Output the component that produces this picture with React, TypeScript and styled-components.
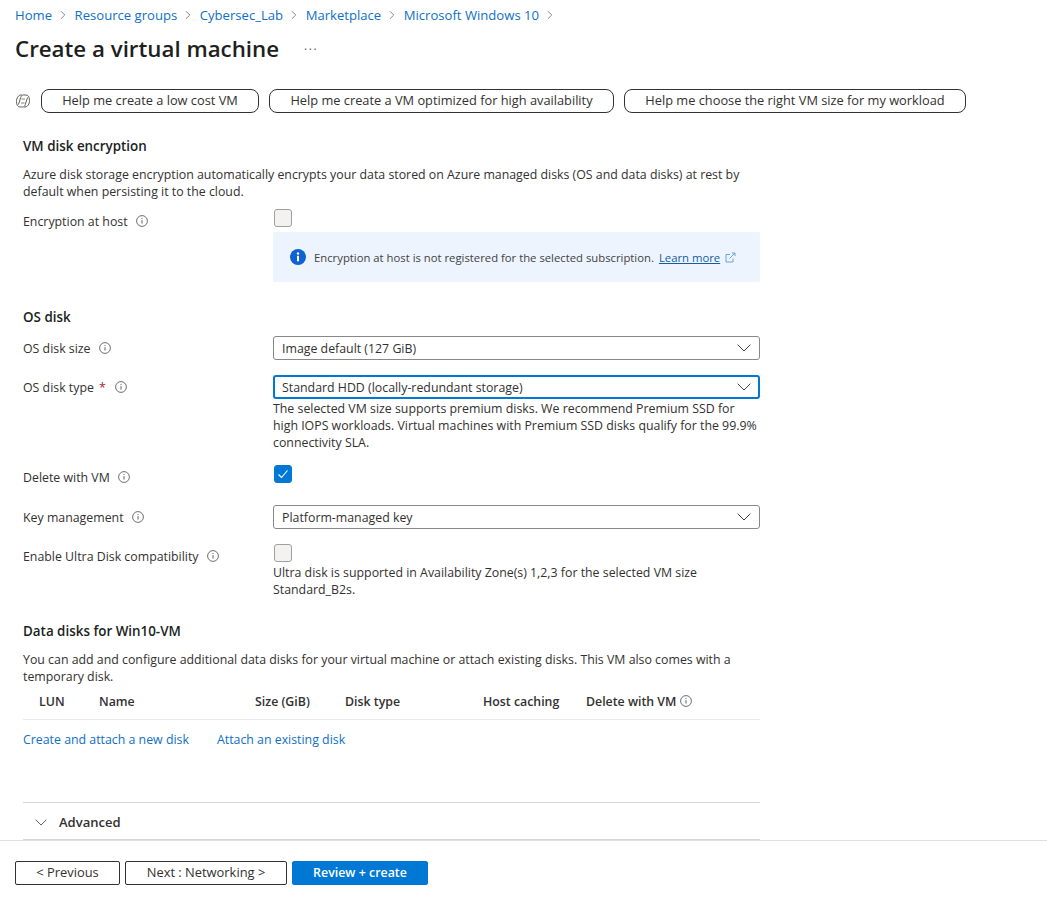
import styled, { createGlobalStyle } from "styled-components";
import { ChevronRight } from "lucide-react";

const GlobalStyle = createGlobalStyle`
  html, body {
    margin: 0;
    height: 100%;
    background: #fff;
    overflow: hidden;
  }
  body {
    font-family: "Open Sans", "Noto Sans", sans-serif;
    font-size: 12.35px;
    color: #323130;
  }
`;

const Page = styled.div`
  display: flex;
  flex-direction: column;
  width: 1047px;
  height: 897px;
`;

const Main = styled.main`
  flex: 1;
  min-height: 0;
  overflow: hidden;
`;

const Breadcrumbs = styled.nav`
  display: flex;
  align-items: center;
  height: 20px;
  margin: 5px 0 0 15px;
  font-size: 13.1px;
  color: #0f6fc6;
  svg {
    margin: 0 4.3px;
    color: #605e5c;
  }
`;

const TitleRow = styled.div`
  display: flex;
  align-items: center;
  height: 36px;
  margin: 5px 0 0 15px;
`;

const Title = styled.h1`
  margin: 0;
  font-size: 22.3px;
  font-weight: 600;
  color: #201f1e;
`;

const More = styled.span`
  margin: -6px 0 0 25px;
  font-size: 12px;
  letter-spacing: 1.5px;
  color: #605e5c;
`;

const CopilotBar = styled.div`
  display: flex;
  align-items: center;
  gap: 10px;
  height: 24px;
  margin: 23px 0 0 15px;
`;

const Pill = styled.button<{ $w: number }>`
  width: ${(p) => p.$w}px;
  height: 24px;
  padding: 0 0 2px;
  font: 500 12.8px "Open Sans", sans-serif;
  color: #323130;
  background: #fff;
  border: 1px solid #323130;
  border-radius: 8px;
`;

const Form = styled.div`
  width: 737px;
  margin: 0 0 0 23px;
`;

const SectionTitle = styled.h2<{ $top: number }>`
  margin: ${(p) => p.$top}px 0 0;
  height: 20px;
  line-height: 20px;
  font-size: 13.4px;
  font-weight: 600;
  color: #201f1e;
`;

const Description = styled.p`
  margin: 10px 0 0;
  line-height: 17px;
  color: #323130;
`;

const Row = styled.div<{ $top: number }>`
  display: grid;
  grid-template-columns: 250px 487px;
  margin-top: ${(p) => p.$top}px;
`;

const Label = styled.div`
  display: flex;
  align-items: center;
  height: 24px;
  gap: 8px;
`;

const Required = styled.span`
  margin: 0 1px 0 -3px;
  color: #a4262c;
`;

const Control = styled.div`
  min-width: 0;
`;

const Check = styled.div<{ $on?: boolean }>`
  display: flex;
  align-items: center;
  justify-content: center;
  box-sizing: border-box;
  width: 18px;
  height: 18px;
  margin-left: 1px;
  background: ${(p) => (p.$on ? "#0078d4" : "#f3f2f1")};
  border: 1px solid ${(p) => (p.$on ? "#0078d4" : "#a19f9d")};
  border-radius: 3px;
`;

const InfoBox = styled.div`
  display: flex;
  align-items: center;
  height: 50px;
  margin-top: 5px;
  padding-left: 17px;
  background: #edf4fe;
  border-radius: 2px;
  font-size: 11.3px;
  color: #424242;
`;

const BoxLink = styled.a`
  margin-left: 5px;
  color: #115ea3;
  text-decoration: underline;
`;

const Select = styled.div<{ $focus?: boolean }>`
  display: flex;
  align-items: center;
  justify-content: space-between;
  box-sizing: border-box;
  height: 24px;
  padding: 0 ${(p) => (p.$focus ? 7 : 8)}px;
  background: #fff;
  border: ${(p) => (p.$focus ? "2px solid #0078d4" : "1px solid #8a8886")};
  border-radius: 3px;
`;

const Help = styled.div<{ $top: number }>`
  margin-top: ${(p) => p.$top}px;
  line-height: 17px;
  color: #323130;
`;

const DiskHeader = styled.div`
  display: grid;
  grid-template-columns: 60px 156px 90px 138px 103px auto;
  align-items: center;
  box-sizing: border-box;
  height: 31px;
  margin-top: 4px;
  padding: 0 0 6px 16px;
  border-bottom: 1px solid #edebe9;
  font-weight: 600;
  color: #323130;
`;

const HeaderCell = styled.div`
  display: flex;
  align-items: center;
  gap: 4px;
`;

const Links = styled.div`
  display: flex;
  gap: 28px;
  margin-top: 11px;
  height: 18px;
  line-height: 18px;
  color: #0f6fc6;
`;

const Advanced = styled.div`
  display: flex;
  align-items: center;
  gap: 12px;
  box-sizing: border-box;
  height: 39px;
  margin-top: 53px;
  padding: 2px 0 0 12px;
  border-top: 1px solid #d6d6d6;
  border-bottom: 2px solid #d6d6d6;
  font-size: 13px;
  font-weight: 600;
  color: #323130;
  svg {
    width: 12px;
    height: 7px;
  }
`;

const Footer = styled.footer`
  display: flex;
  gap: 5px;
  box-sizing: border-box;
  height: 57px;
  padding: 20px 0 0 15px;
  border-top: 1px solid #e0e0e0;
`;

const FooterButton = styled.button<{ $w: number; $primary?: boolean }>`
  width: ${(p) => p.$w}px;
  height: 24px;
  padding: 0 0 2px;
  font: ${(p) => (p.$primary ? "600 12.4px" : "500 12.9px")} "Open Sans", sans-serif;
  color: ${(p) => (p.$primary ? "#fff" : "#323130")};
  background: ${(p) => (p.$primary ? "#0078d4" : "#fff")};
  border: 1px solid ${(p) => (p.$primary ? "#0078d4" : "#323130")};
  border-radius: 2px;
`;

const InfoIcon = () => (
  <svg width="12" height="12" viewBox="0 0 12 12" fill="none" stroke="#605e5c">
    <circle cx="6" cy="6" r="5.4" strokeWidth="0.9" />
    <path d="M6 5.2v3.3" strokeWidth="1" />
    <circle cx="6" cy="3.5" r="0.6" fill="#605e5c" stroke="none" />
  </svg>
);

const CopilotIcon = () => (
  <svg width="16" height="16" viewBox="0 0 16 16" fill="none" stroke="#605e5c" strokeWidth="1">
    <path d="M7 2H6C3.500 2 1.500 5 1.500 8.500 1.500 11.500 2.500 14 5 14h2.500c1.500 0 2.300-1 2.800-2.500l2.200-7" />
    <path d="M9 14h1c2.500 0 4.500-3 4.500-6.500C14.500 4.500 13.500 2 11 2H8.500C7 2 6.200 3 5.700 4.500l-2.200 7" />
    <path d="M6.500 6h3.500M6 10h3.500" strokeWidth="0.8" />
  </svg>
);

const Crumb = () => <ChevronRight size={14} strokeWidth={1.25} />;

const Caret = () => (
  <svg width="14" height="8" viewBox="0 0 14 8" fill="none" stroke="#424242" strokeWidth="1">
    <path d="M.7.7 7 7 13.300.7" />
  </svg>
);

export default function App() {
  return (
    <Page>
      <GlobalStyle />
      <Main>
        <Breadcrumbs>
          Home <Crumb /> Resource groups <Crumb /> Cybersec_Lab <Crumb /> Marketplace <Crumb /> Microsoft Windows 10 <Crumb />
        </Breadcrumbs>
        <TitleRow>
          <Title>Create a virtual machine</Title>
          <More>...</More>
        </TitleRow>
        <CopilotBar>
          <CopilotIcon />
          <Pill $w={218}>Help me create a low cost VM</Pill>
          <Pill $w={345}>Help me create a VM optimized for high availability</Pill>
          <Pill $w={342}>Help me choose the right VM size for my workload</Pill>
        </CopilotBar>
        <Form>
          <SectionTitle $top={23}>VM disk encryption</SectionTitle>
          <Description>
            Azure disk storage encryption automatically encrypts your data stored on Azure managed disks (OS and data disks) at rest by default when persisting it to the cloud.
          </Description>
          <Row $top={9}>
            <Label>
              Encryption at host <InfoIcon />
            </Label>
            <Control>
              <Check />
              <InfoBox>
                <svg width="16" height="16" viewBox="0 0 16 16" style={{ marginRight: 8 }}>
                  <circle cx="8" cy="8" r="8" fill="#0f62cf" />
                  <rect x="7" y="6.800" width="2" height="5.500" fill="#fff" />
                  <circle cx="8" cy="4.500" r="1.200" fill="#fff" />
                </svg>
                Encryption at host is not registered for the selected subscription.
                <BoxLink>Learn more</BoxLink>
                <svg width="11" height="11" viewBox="0 0 11 11" fill="none" stroke="#5b9bd5" strokeWidth="0.9" style={{ marginLeft: 5 }}>
                  <path d="M5 2.500H1v7.500h7V6.500" />
                  <path d="M4.500 6.500L10 1M7 1h3v3" />
                </svg>
              </InfoBox>
            </Control>
          </Row>
          <SectionTitle $top={25}>OS disk</SectionTitle>
          <Row $top={9}>
            <Label>
              OS disk size <InfoIcon />
            </Label>
            <Select>
              Image default (127 GiB) <Caret />
            </Select>
          </Row>
          <Row $top={15}>
            <Label>
              OS disk type <Required>*</Required> <InfoIcon />
            </Label>
            <Control>
              <Select $focus>
                Standard HDD (locally-redundant storage) <Caret />
              </Select>
              <Help $top={1}>
                The selected VM size supports premium disks. We recommend Premium SSD for high IOPS workloads. Virtual machines with Premium SSD disks qualify for the 99.9% connectivity SLA.
              </Help>
            </Control>
          </Row>
          <Row $top={14}>
            <Label>
              Delete with VM <InfoIcon />
            </Label>
            <Check $on>
              <svg width="14" height="14" viewBox="0 0 14 14" fill="none" stroke="#fff" strokeWidth="1.100">
                <path d="M2.500 7.500l3 3 6-7" />
              </svg>
            </Check>
          </Row>
          <Row $top={16}>
            <Label>
              Key management <InfoIcon />
            </Label>
            <Select>
              Platform-managed key <Caret />
            </Select>
          </Row>
          <Row $top={15}>
            <Label>
              Enable Ultra Disk compatibility <InfoIcon />
            </Label>
            <Control>
              <Check />
              <Help $top={2}>
                Ultra disk is supported in Availability Zone(s) 1,2,3 for the selected VM size
                <br />
                Standard_B2s.
              </Help>
            </Control>
          </Row>
          <SectionTitle $top={23}>Data disks for Win10-VM</SectionTitle>
          <Description>
            You can add and configure additional data disks for your virtual machine or attach existing disks. This VM also comes with a temporary disk.
          </Description>
          <DiskHeader>
            <HeaderCell>LUN</HeaderCell>
            <HeaderCell>Name</HeaderCell>
            <HeaderCell>Size (GiB)</HeaderCell>
            <HeaderCell>Disk type</HeaderCell>
            <HeaderCell>Host caching</HeaderCell>
            <HeaderCell>
              Delete with VM <InfoIcon />
            </HeaderCell>
          </DiskHeader>
          <Links>
            <span>Create and attach a new disk</span>
            <span>Attach an existing disk</span>
          </Links>
          <Advanced>
            <Caret />
            Advanced
          </Advanced>
        </Form>
      </Main>
      <Footer>
        <FooterButton $w={105}>&lt; Previous</FooterButton>
        <FooterButton $w={162}>Next : Networking &gt;</FooterButton>
        <FooterButton $w={136} $primary>
          Review + create
        </FooterButton>
      </Footer>
    </Page>
  );
}
